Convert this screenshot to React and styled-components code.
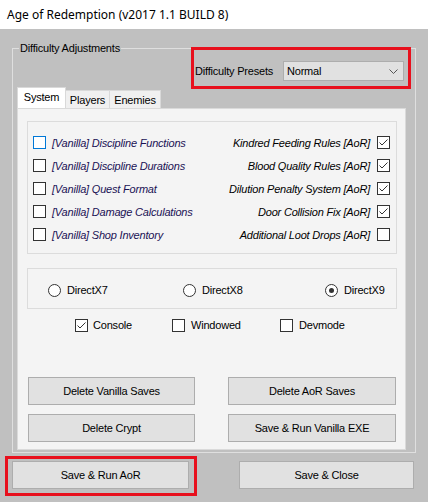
import React from 'react';
import styled, { createGlobalStyle } from 'styled-components';

const Global = createGlobalStyle`
  html, body { margin: 0; padding: 0; }
  body {
    width: 428px; height: 502px; overflow: hidden;
    background: #c0c0c0;
    font-family: "Liberation Sans", Arial, sans-serif;
  }
`;

const Window = styled.div`
  width: 428px; height: 502px;
  display: flex; flex-direction: column;
  background: #c0c0c0;
  font-size: 11px; letter-spacing: -0.2px; color: #000;
`;

const TitleBar = styled.div`
  height: 29px; flex: none; box-sizing: border-box;
  background: #fff;
  display: flex; align-items: center;
  padding-left: 7px;
  font-family: "Noto Sans", sans-serif; font-size: 12px; letter-spacing: 0;
  color: #000;
`;

const Group = styled.div`
  position: relative;
  margin: 19px 0 0 12px;
  width: 404px; box-sizing: border-box;
  border: 1px solid #dfdfdf;
  padding: 0 0 2px 0;
  display: flex; flex-direction: column;
`;

const Legend = styled.span`
  position: absolute; left: 6px; top: -7px;
  line-height: 13px; padding: 0 1px;
  background: #c0c0c0;
`;

const Highlight = styled.div`
  box-sizing: border-box;
  border: 3px solid #e8101d;
  display: flex; align-items: center; justify-content: space-between;
`;

const PresetBox = styled(Highlight)`
  align-self: flex-end;
  margin: -2px 4px 0 0;
  width: 220px; height: 42px;
  padding: 6px 4px 0 1px;
`;

const Combo = styled.div`
  width: 121px; height: 20px; box-sizing: border-box;
  background: #e1e1e1; border: 1px solid #adadad;
  display: flex; align-items: center; justify-content: space-between;
  padding: 0 5px 0 3px;
`;

const TabStrip = styled.div`
  display: flex; align-items: flex-end;
  margin: -2px 0 0 4px; height: 21px;
`;

const Tab = styled.div`
  box-sizing: border-box;
  width: ${p => p.$w}px; height: ${p => (p.$active ? 21 : 18)}px;
  border: 1px solid #d9d9d9; border-bottom: none;
  background: ${p => (p.$active ? '#ffffff' : '#f0f0f0')};
  display: flex; align-items: center; justify-content: center;
  padding-bottom: ${p => (p.$active ? 2 : 0)}px;
  margin-left: ${p => (p.$first ? 0 : -1)}px;
`;

const Panel = styled.div`
  margin-left: 4px;
  width: 389px; height: 342px; box-sizing: border-box;
  background: #f4f4f4;
  border: 1px solid #dadada;
  display: flex; flex-direction: column;
  padding: 12px 8px 7px 9px;
`;

const Box = styled.div`
  border: 1px solid #dcdcdc;
  box-sizing: border-box;
`;

const OptionGrid = styled(Box)`
  display: grid;
  grid-template-columns: 1fr auto;
  grid-auto-rows: 23px;
  padding: 9px 6px 7px 5px;
`;

const Option = styled.label`
  display: flex; align-items: center;
  gap: ${p => p.$gap || 6}px;
  justify-content: ${p => (p.$right ? 'flex-end' : 'flex-start')};
  font-style: ${p => (p.$italic ? 'italic' : 'normal')};
  color: ${p => p.$color || '#000'};
  width: ${p => (p.$w ? p.$w + 'px' : 'auto')};
  flex: none;
`;

const CheckBox = styled.span`
  width: 13px; height: 13px; box-sizing: border-box; flex: none;
  border: 1px solid ${p => (p.$focus ? '#0078d7' : '#333333')};
  background: #fff;
  display: flex;
`;

const RadioCircle = styled.span`
  width: 13px; height: 13px; box-sizing: border-box; flex: none;
  border: 1px solid #333; border-radius: 50%;
  background: #fff;
  display: flex; align-items: center; justify-content: center;
  &::after {
    content: '';
    width: 5px; height: 5px; border-radius: 50%;
    background: ${p => (p.$on ? '#333' : 'transparent')};
  }
`;

const RadioBox = styled(Box)`
  margin-top: 14px; height: 41px;
  display: flex; align-items: center;
  padding: 3px 0 0 20px;
`;

const FlagRow = styled.div`
  margin-top: 8px; height: 16px;
  display: flex; align-items: center;
  padding-left: 48px;
`;

const ButtonGrid = styled.div`
  margin-top: auto;
  display: grid;
  grid-template-columns: 167px 168px;
  justify-content: space-between;
  row-gap: 9px;
  padding: 0 1px;
`;

const Button = styled.div`
  height: 28px; box-sizing: border-box;
  width: ${p => (p.$w ? p.$w + 'px' : 'auto')};
  background: #e1e1e1; border: 1px solid #adadad;
  display: flex; align-items: center; justify-content: center;
`;

const Footer = styled.div`
  display: flex; align-items: flex-start;
  margin-top: 3px;
`;

const RunBox = styled(Highlight)`
  margin-left: 5px;
  width: 192px; height: 40px;
  padding: 2px 5px 4px 4px;
  align-items: flex-start;
`;

const CloseButton = styled(Button)`
  margin: 5px 0 0 42px;
`;

const Check = ({ on, focus }) => (
  <CheckBox $focus={focus}>
    {on && (
      <svg width="11" height="11" viewBox="0 0 11 11">
        <polyline points="1.5,5.5 4,8 9.5,2.5" fill="none" stroke="#333" strokeWidth="1" />
      </svg>
    )}
  </CheckBox>
);

const Chevron = () => (
  <svg width="9" height="5" viewBox="0 0 9 5">
    <polyline points="0.5,0.5 4.5,4.5 8.5,0.5" fill="none" stroke="#555" strokeWidth="1" />
  </svg>
);

const left = [
  '[Vanilla] Discipline Functions',
  '[Vanilla] Discipline Durations',
  '[Vanilla] Quest Format',
  '[Vanilla] Damage Calculations',
  '[Vanilla] Shop Inventory',
];
const right = [
  ['Kindred Feeding Rules [AoR]', true],
  ['Blood Quality Rules [AoR]', true],
  ['Dilution Penalty System [AoR]', true],
  ['Door Collision Fix [AoR]', true],
  ['Additional Loot Drops [AoR]', false],
];

export default function App() {
  return (
    <>
      <Global />
      <Window>
        <TitleBar>Age of Redemption (v2017 1.1 BUILD 8)</TitleBar>
        <Group>
          <Legend>Difficulty Adjustments</Legend>
          <PresetBox>
            <span>Difficulty Presets</span>
            <Combo>
              <span>Normal</span>
              <Chevron />
            </Combo>
          </PresetBox>
          <TabStrip>
            <Tab $w={49} $active $first>System</Tab>
            <Tab $w={45}>Players</Tab>
            <Tab $w={52}>Enemies</Tab>
          </TabStrip>
          <Panel>
            <OptionGrid>
              {left.map((l, i) => (
                <React.Fragment key={l}>
                  <Option $italic $color="#1a1254">
                    <Check focus={i === 0} />
                    <span>{l}</span>
                  </Option>
                  <Option $italic $right $gap={7}>
                    <span>{right[i][0]}</span>
                    <Check on={right[i][1]} />
                  </Option>
                </React.Fragment>
              ))}
            </OptionGrid>
            <RadioBox>
              <Option $w={135}><RadioCircle />DirectX7</Option>
              <Option $w={142}><RadioCircle />DirectX8</Option>
              <Option><RadioCircle $on />DirectX9</Option>
            </RadioBox>
            <FlagRow>
              <Option $w={97} $gap={5}><Check on />Console</Option>
              <Option $w={108} $gap={6}><Check />Windowed</Option>
              <Option $gap={6}><Check />Devmode</Option>
            </FlagRow>
            <ButtonGrid>
              <Button>Delete Vanilla Saves</Button>
              <Button>Delete AoR Saves</Button>
              <Button>Delete Crypt</Button>
              <Button>Save &amp; Run Vanilla EXE</Button>
            </ButtonGrid>
          </Panel>
        </Group>
        <Footer>
          <RunBox>
            <Button $w={177}>Save &amp; Run AoR</Button>
          </RunBox>
          <CloseButton $w={175}>Save &amp; Close</CloseButton>
        </Footer>
      </Window>
    </>
  );
}
